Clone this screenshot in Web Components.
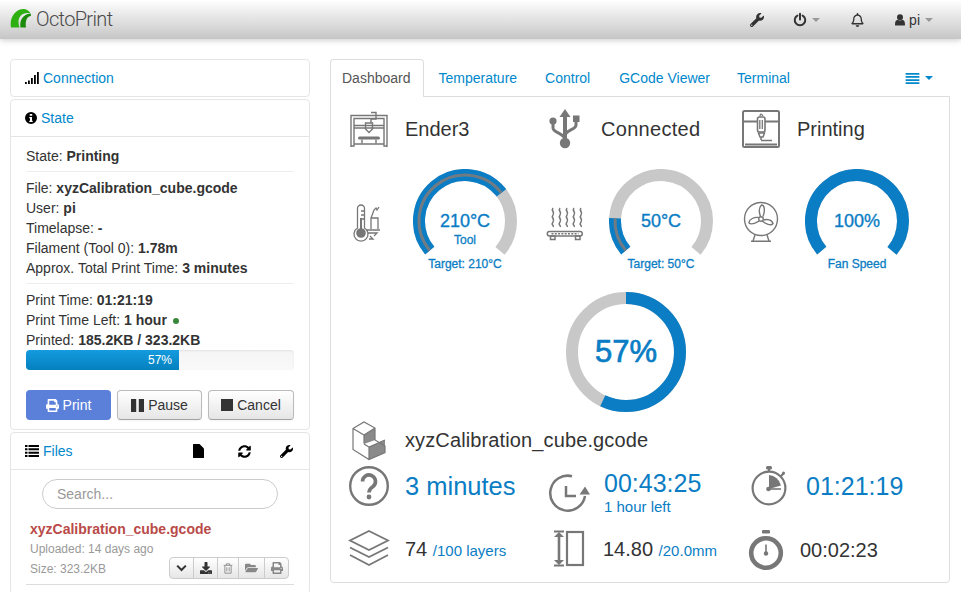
<!DOCTYPE html>
<html>
<head>
<meta charset="utf-8">
<title>OctoPrint</title>
<style>
	html, body { margin: 0; height: 592px; overflow: hidden; background: #fff; }
	body { font: 14px/20px "Liberation Sans", Arial, sans-serif; color: #333; }
</style>
</head>
<body>
<op-app></op-app>
<script>
// font awesome style glyphs, drawn in their own viewBox
const glyphs = {
	wrench: ['0 0 512 512', '<path d="M507.73 109.1c-2.24-9.03-13.54-12.09-20.12-5.51l-74.36 74.36-67.88-11.31-11.31-67.88 74.36-74.36c6.62-6.62 3.43-17.9-5.66-20.16-47.38-11.74-99.55.91-136.58 37.93-39.64 39.64-50.55 97.1-34.05 147.2L18.74 402.76c-24.99 24.99-24.99 65.51 0 90.5 24.99 24.99 65.51 24.99 90.5 0l213.21-213.21c50.12 16.71 107.47 5.68 147.37-34.22 37.07-37.07 49.7-89.32 37.91-136.73zM64 472c-13.25 0-24-10.75-24-24 0-13.26 10.75-24 24-24s24 10.74 24 24c0 13.25-10.75 24-24 24z"/>'],
	bell: ['0 0 448 512', '<path d="M439.39 362.29c-19.32-20.76-55.47-51.99-55.47-154.29 0-77.7-54.48-139.9-127.94-155.16V32c0-17.67-14.32-32-31.98-32s-31.98 14.33-31.98 32v20.84C118.56 68.1 64.08 130.3 64.08 208c0 102.3-36.15 133.53-55.47 154.29-6 6.45-8.66 14.16-8.61 21.71.11 16.4 12.98 32 32.1 32h383.8c19.12 0 32-15.6 32.1-32 .05-7.55-2.61-15.27-8.61-21.71zM67.53 368c21.22-27.97 44.42-74.33 44.53-159.42 0-.2-.06-.38-.06-.58 0-61.86 50.14-112 112-112s112 50.14 112 112c0 .2-.06.38-.06.58.11 85.1 23.31 131.46 44.53 159.42H67.53zM224 512c35.32 0 63.97-28.65 63.97-64H160.03c0 35.35 28.65 64 63.97 64z"/>'],
	refresh: ['0 0 512 512', '<path d="M370.72 133.28C339.458 104.008 298.888 87.962 255.848 88c-77.458.068-144.328 53.178-162.791 126.85-1.344 5.363-6.122 9.15-11.651 9.15H24.103c-7.498 0-13.194-6.807-11.807-14.176C33.933 94.924 134.813 8 256 8c66.448 0 126.791 26.136 171.315 68.685L463.03 40.97C478.149 25.851 504 36.559 504 57.941V192c0 13.255-10.745 24-24 24H345.941c-21.382 0-32.09-25.851-16.971-40.971l41.75-41.749zM32 296h134.059c21.382 0 32.09 25.851 16.971 40.971l-41.75 41.75c31.262 29.273 71.835 45.319 114.876 45.28 77.418-.07 144.315-53.144 162.787-126.849 1.344-5.363 6.122-9.15 11.651-9.15h57.304c7.498 0 13.194 6.807 11.807 14.176C478.067 417.076 377.187 504 256 504c-66.448 0-126.791-26.136-171.315-68.685L48.97 471.03C33.851 486.149 8 475.441 8 454.059V320c0-13.255 10.745-24 24-24z"/>'],
	print: ['0 0 512 512', '<path d="M448 192V77.25c0-8.49-3.37-16.62-9.37-22.63L393.37 9.37c-6-6-14.14-9.37-22.63-9.37H96C78.33 0 64 14.33 64 32v160c-35.35 0-64 28.65-64 64v112c0 8.84 7.16 16 16 16h48v96c0 17.67 14.33 32 32 32h320c17.67 0 32-14.33 32-32v-96h48c8.84 0 16-7.16 16-16V256c0-35.35-28.65-64-64-64zm-64 256H128v-96h256v96zm0-224H128V64h192v48c0 8.84 7.16 16 16 16h48v96zm48 72c-13.25 0-24-10.75-24-24 0-13.26 10.75-24 24-24s24 10.74 24 24c0 13.25-10.75 24-24 24z"/>'],
	folder: ['0 0 576 512', '<path d="M572.694 292.093L500.27 416.248A63.997 63.997 0 0 1 444.989 448H45.025c-18.523 0-30.064-20.093-20.731-36.093l72.424-124.155A64 64 0 0 1 152 256h399.964c18.523 0 30.064 20.093 20.73 36.093zM152 224h328v-48c0-26.51-21.49-48-48-48H272l-64-64H48C21.49 64 0 85.49 0 112v278.046l69.077-118.418C86.214 242.25 117.989 224 152 224z"/>'],
	download: ['0 0 512 512', '<path d="M216 0h80c13.3 0 24 10.7 24 24v168h87.7c17.8 0 26.7 21.5 14.1 34.1L269.7 378.3c-7.5 7.5-19.8 7.5-27.3 0L90.1 226.1c-12.6-12.6-3.7-34.1 14.1-34.1H192V24c0-13.3 10.7-24 24-24zm296 376v112c0 13.3-10.7 24-24 24H24c-13.3 0-24-10.7-24-24V376c0-13.3 10.7-24 24-24h146.7l49 49c20.1 20.1 52.5 20.1 72.6 0l49-49H488c13.3 0 24 10.7 24 24zm-124 88c0-11-9-20-20-20s-20 9-20 20 9 20 20 20 20-9 20-20zm64 0c0-11-9-20-20-20s-20 9-20 20 9 20 20 20 20-9 20-20z"/>'],
	power: ['0 0 24 24', '<path d="M7.5 5.2a9 9 0 1 0 9 0" fill="none" stroke="currentColor" stroke-width="3.400" stroke-linecap="round"/><path d="M12 2v10" fill="none" stroke="currentColor" stroke-width="3.400" stroke-linecap="round"/>'],
	user: ['0 0 20 24', '<circle cx="10" cy="6.5" r="6"/><path d="M1 23c-1 0-1-1-1-2 0-6 2-9 5.500-9.500 2.500 2 6.500 2 9 0C18 12 20 15 20 21c0 1 0 2-1 2z"/>'],
	info: ['0 0 24 24', '<path fill-rule="evenodd" d="M12 0a12 12 0 1 1 0 24a12 12 0 0 1 0-24zM9.500 4v3.500h5V4zM8.500 10v2.500h1.500v5H8.500V20h7v-2.500H14V10z"/>'],
	signal: ['0 0 14 12', '<rect x="0" y="10" width="1.800" height="2"/><rect x="3" y="8.500" width="1.800" height="3.500"/><rect x="6" y="6" width="1.800" height="6"/><rect x="9" y="3" width="1.800" height="9"/><rect x="12" y="0" width="1.800" height="12"/>'],
	list: ['0 0 14 12', '<path d="M0 0h2.500v2H0zM3.500 0H14v2H3.500zM0 3.300h2.500v2H0zM3.500 3.300H14v2H3.500zM0 6.700h2.500v2H0zM3.500 6.700H14v2H3.500zM0 10h2.500v2H0zM3.500 10H14v2H3.500z"/>'],
	lines: ['0 0 15 12', '<path d="M0 0h15v2H0zM0 3.300h15v2H0zM0 6.700h15v2H0zM0 10h15v2H0z"/>'],
	file: ['0 0 11 14', '<path d="M0 .5Q0 0 .5 0H6.500L11 4.500V13.500Q11 14 10.500 14H.5Q0 14 0 13.500z"/>'],
	pause: ['0 0 12 12', '<path d="M0 0h4.800v12H0zM7.200 0H12v12H7.200z"/>'],
	stop: ['0 0 12 12', '<path d="M0 0h12v12H0z"/>'],
	chevron: ['0 0 14 10', '<path d="M1.500 2l5.500 5.500L12.500 2" fill="none" stroke="currentColor" stroke-width="2.600"/>'],
	trash: ['0 0 12 14', '<path d="M.5 3h11M4 3V1h4v2M2 3v10h8V3M4.500 5.500v5M7.500 5.500v5" fill="none" stroke="currentColor" stroke-width="1.100"/>'],
};

class OpIcon extends HTMLElement {
	connectedCallback() {
		const [viewBox, body] = glyphs[this.getAttribute('name')];
		const w = this.getAttribute('w') || 14;
		const h = this.getAttribute('h') || 14;
		this.attachShadow({ mode: 'open' });
		this.shadowRoot.innerHTML = `
			<style>
				:host { display: inline-flex; flex: none; width: ${w}px; height: ${h}px; fill: currentColor; }
				svg { width: 100%; height: 100%; display: block; }
			</style>
			<svg viewBox="${viewBox}">${body}</svg>
		`;
	}
}

// the larger line drawings of the dashboard, 48x40 cells
const art = {
	ender: `<svg viewBox="0 0 48 40"><g fill="none" stroke="#777" stroke-width="1.400">
		<path d="M6 37V5.500h36V37M6 36h3V34h30v2h3M9 34V8.500h30V34"/>
		<path d="M9 15.500h30M9 18h30"/>
		<path d="M20.500 13h7v6l-3.500 3.500-3.500-3.500zM26 13V9h5V2.500h-5"/>
		<path d="M17 29.500v4M31 29.500v4"/></g>
		<rect x="13" y="26.500" width="22" height="3" rx="1.500" fill="#777"/></svg>`,
	usb: `<svg viewBox="0 0 48 40"><g fill="#777"><path d="M24-1l5.500 8h-3.500v25h-4V7h-3.500z"/><circle cx="24" cy="33" r="5.200"/><circle cx="12" cy="11" r="3.600"/><rect x="32" y="5.500" width="6.500" height="6.500"/></g>
		<path d="M12 12v6c0 5 12 5 12 12M35 12v3c0 5-11 5-11 11" fill="none" stroke="#777" stroke-width="3"/></svg>`,
	printing: `<svg viewBox="0 0 48 40"><g fill="none" stroke="#777"><rect x="6" y="1" width="36" height="36" rx="1.500" stroke-width="2"/>
		<path d="M7 11.500h13M28 11.500h13M8 34.500h32" stroke-width="1.800"/><path d="M24 30.500h11M26 6c-2-3-3-2-3 .5" stroke-width="1.300"/>
		<rect x="20.500" y="7" width="7.500" height="15" rx="2" stroke-width="1.600"/><path d="M22.800 10v9M25.300 10v9" stroke-width="1.300"/><path d="M21.500 23h6l-1.500 4h-3z M24 27v3" stroke-width="1.500"/></g></svg>`,
	tool: `<svg viewBox="0 0 48 48"><g fill="none" stroke="#777" stroke-width="1.300">
		<path d="M12.500 31V11.500a3.500 3.500 0 0 1 7 0V31a7 7 0 1 1-7 0z"/><path d="M16 14h3.500M16 18h3.500M16 22h3.500"/>
		<path d="M26 32V21h7v11M21 33h14M26 21l3-8 2-2 1 2 2-3M23 36h9l-3 3M25 39l3 3h-4"/></g>
		<circle cx="16" cy="36" r="4.800" fill="#777"/><rect x="15" y="21" width="2" height="12" fill="#777"/></svg>`,
	bed: `<svg viewBox="0 0 48 48"><g transform="translate(3.500 0)" fill="none" stroke="#777" stroke-width="1.500"><path d="M8.500 11c-2.500 3 2.500 4 0 7s2.500 4 0 7s1 3 .3 5M15.500 11c-2.500 3 2.500 4 0 7s2.500 4 0 7s1 3 .3 5M22.500 11c-2.500 3 2.500 4 0 7s2.500 4 0 7s1 3 .3 5M29.500 11c-2.500 3 2.500 4 0 7s2.500 4 0 7s1 3 .3 5M36.500 11c-2.500 3 2.500 4 0 7s2.500 4 0 7s1 3 .3 5"/>
		<rect x="2.800" y="34.500" width="35" height="4.500" rx="2.200"/><path d="M6 39h4.500v3.500H6zM31 39h4.500v3.500H31z"/><path d="M7 36.800h27" stroke-dasharray="2 1.300" stroke-width="1.500"/></g></svg>`,
	fan: `<svg viewBox="0 0 48 48"><g fill="none" stroke="#777" stroke-width="1.400"><circle cx="24" cy="22" r="16.500"/><path d="M18 38l-2 6M30 38l2 6M14 44.300h20"/>
		<path d="M23.500 19.500c-1.500-4-1.500-9 1-11.500 3.500 0 3.500 6.500 1.500 11.500M26.500 23c3.500-1 8.500-.5 9.500 3.500-2 3-7.500 0-11-2.500M22 24c-3.500 2-7.500 4.500-10 2-.5-3.500 5-6 9.500-5.500"/><circle cx="24" cy="22" r="2.300"/></g></svg>`,
	cube: `<svg viewBox="0 0 48 40"><path d="M24 27l16-7v12.500l-16 7zM19 15l11-7v12l-11 4z" fill="#8a8a8a"/>
		<g fill="none" stroke="#777" stroke-width="1.200"><path d="M8 8.500L19 2l11 6v12l10 6v6.500L24 39.500 8 29.500zM8 8.500L19 15l11-7M19 15v8.500M19 24l5 3 16-7M24 27v12.500"/></g></svg>`,
	question: `<svg viewBox="0 0 48 48"><circle cx="24" cy="24" r="18.800" fill="none" stroke="#777" stroke-width="2.400"/><path d="M17.500 19.500a6.500 6.500 0 1 1 10.500 5c-3 2-4 3-4 6" fill="none" stroke="#777" stroke-width="3.600"/><circle cx="24" cy="35" r="2.400" fill="#777"/></svg>`,
	clock: `<svg viewBox="0 0 48 48"><path d="M28 7.200A17.500 17.500 0 1 0 41 27" fill="none" stroke="#777" stroke-width="2.500"/><path d="M35.500 25.500l5.500-8 5 8z" fill="#777"/><path d="M22 17v10h10" fill="none" stroke="#777" stroke-width="2.500"/></svg>`,
	stopwatch: `<svg viewBox="0 0 48 48"><circle cx="24" cy="26" r="16.400" fill="none" stroke="#777" stroke-width="2.200"/><path d="M24 27V13a14 14 0 0 1 12 10.500z" fill="#777"/><rect x="21" y="4" width="6" height="3.500" rx="1.500" fill="#777"/><path d="M24 7v3M36 14l3-3" stroke="#777" stroke-width="2.200"/><circle cx="38.500" cy="11" r="1.500" fill="#777"/><circle cx="23.500" cy="27" r="2.300" fill="#777"/><path d="M24 27h12" stroke="#777" stroke-width="1.600"/></svg>`,
	layers: `<svg viewBox="0 0 48 48"><g fill="none" stroke="#777" stroke-width="1.800"><path d="M24 5l19 9.500L24 24 5 14.500z"/><path d="M5 21.500L24 31l19-9.500M5 29L24 39l19-10"/></g></svg>`,
	zheight: `<svg viewBox="0 0 48 48"><rect x="24" y="6" width="16" height="33" fill="none" stroke="#777" stroke-width="2.200"/><path d="M16 8v29" stroke="#777" stroke-width="2.600"/><path d="M11 5.500h10M11 39.500h10" stroke="#777" stroke-width="2"/><path d="M16 6l5 5H11zM16 39l5-5H11z" fill="#777"/></svg>`,
	timer: `<svg viewBox="0 0 48 48"><circle cx="24" cy="27" r="14.800" fill="none" stroke="#777" stroke-width="4.600"/><rect x="20" y="4" width="8" height="3.400" rx="1.200" fill="#777"/><path d="M24 18.500v9" stroke="#777" stroke-width="1.600"/><circle cx="24" cy="27.500" r="2.200" fill="#777"/></svg>`,
};

class OpArt extends HTMLElement {
	connectedCallback() {
		this.attachShadow({ mode: 'open' });
		this.shadowRoot.innerHTML = `
			<style>
				:host { display: block; flex: none; width: 48px; height: ${this.getAttribute('h') || 40}px; }
				svg { width: 100%; height: 100%; display: block; overflow: visible; }
			</style>
			${art[this.getAttribute('name')]}
		`;
	}
}

class OpNavbar extends HTMLElement {
	connectedCallback() {
		this.attachShadow({ mode: 'open' });
		this.shadowRoot.innerHTML = `
			<style>
				:host {
					display: flex;
					align-items: center;
					height: 39px;
					padding: 0 28px 0 10px;
					background: linear-gradient(#fff, #c6c6c6);
					box-shadow: 0 1px 6px rgba(0, 0, 0, .22);
					color: #333;
				}
				.brand {
					display: flex;
					align-items: center;
					margin-right: auto;
					font: 300 20px/26px Roboto, "Liberation Sans", sans-serif;
					letter-spacing: -.65px;
					color: #4a4a4a;
				}
				.brand span { margin-bottom: 2px; }
				.brand svg { width: 21px; height: 19px; margin: 0 5px 3px 0; }
				.caret { width: 0; height: 0; margin-left: 5px; border: 4px solid transparent; border-top-color: #999; border-bottom: 0; }
				.item { display: flex; align-items: center; }
			</style>
			<div class="brand">
				<svg viewBox="0 0 21 19">
					<path d="M1 18.500C-1 8 6 0 13.500 0c3 0 5.500 1.500 7 4.500-3-1-7.500-.5-10 2.500-2.500 3-2.500 7-1 11.500z" fill="#2eb012"/>
					<path d="M10.500 18.500C9.500 12 12 5.500 20.500 4.500c.5 1 .5 1.500.5 2.500-4 0-6 5-5 11.500z" fill="#1c8a0a"/>
				</svg>
				<span>OctoPrint</span>
			</div>
			<div class="item"><op-icon name="wrench"></op-icon></div>
			<div class="item" style="margin-left:29px"><op-icon name="power" w="14" h="15"></op-icon><span class="caret"></span></div>
			<div class="item" style="margin-left:31px"><op-icon name="bell" w="13" h="14"></op-icon></div>
			<div class="item" style="margin-left:31px"><op-icon name="user" w="10" h="12"></op-icon><span style="margin-left:4px">pi</span><span class="caret"></span></div>
		`;
	}
}

class OpPanel extends HTMLElement {
	connectedCallback() {
		this.attachShadow({ mode: 'open' });
		this.shadowRoot.innerHTML = `
			<style>
				:host {
					display: block;
					border: 1px solid #e5e5e5;
					border-radius: 4px;
					margin-bottom: 2px;
				}
				header {
					display: flex;
					align-items: center;
					height: 20px;
					padding: 8px 15px 8px 14px;
					color: #0088cc;
				}
				header ::slotted([slot="icon"]) { color: #000; margin-right: 4px; }
				.actions { margin-left: auto; display: flex; align-items: center; color: #000; }
				main { display: none; padding: 9px 15px; border-top: 1px solid #e5e5e5; }
				:host([open]) main { display: block; }
			</style>
			<header>
				<slot name="icon"></slot>
				<span>${this.getAttribute('heading')}</span>
				<div class="actions"><slot name="actions"></slot></div>
			</header>
			<main><slot></slot></main>
		`;
	}
}

class OpState extends HTMLElement {
	connectedCallback() {
		this.attachShadow({ mode: 'open' });
		this.shadowRoot.innerHTML = `
			<style>
				:host { display: block; color: #333; }
				hr { border: 0; border-top: 1px solid #eee; margin: 5px 0 6px; }
				.dot { display: inline-block; width: 6px; height: 6px; margin-left: 2px; border-radius: 50%; background: #3a873a; vertical-align: 1px; }
				.bar { position: relative; height: 20px; margin-bottom: 20px; border-radius: 4px; background: linear-gradient(#f5f5f5, #f9f9f9); overflow: hidden; box-shadow: inset 0 1px 2px rgba(0,0,0,.08); text-align: center; color: #fff; font-size: 12px; }
				.bar i { position: absolute; left: 0; top: 0; bottom: 0; width: 57%; background: linear-gradient(#149bdf, #0480be); }
				.bar span { position: relative; }
				.buttons { display: flex; gap: 6px; }
				button {
					display: flex;
					align-items: center;
					justify-content: center;
					gap: 4px;
					width: 85px;
					height: 30px;
					padding: 0;
					font: inherit;
					color: #333;
					border: 1px solid #bbb;
					border-bottom-color: #a2a2a2;
					border-radius: 4px;
					background: linear-gradient(#fff, #e6e6e6);
					box-shadow: inset 0 1px 0 rgba(255,255,255,.2), 0 1px 2px rgba(0,0,0,.05);
				}
				button.primary { color: #fff; border: 0; background: #5b80da; box-shadow: none; }
				b { color: #333; }
			</style>
			<div>State: <b>Printing</b></div>
			<hr>
			<div>File: <b>xyzCalibration_cube.gcode</b></div>
			<div>User: <b>pi</b></div>
			<div>Timelapse: <b>-</b></div>
			<div>Filament (Tool 0): <b>1.78m</b></div>
			<div>Approx. Total Print Time: <b>3 minutes</b></div>
			<hr>
			<div>Print Time: <b>01:21:19</b></div>
			<div>Print Time Left: <b>1 hour</b> <span class="dot"></span></div>
			<div>Printed: <b>185.2KB / 323.2KB</b></div>
			<div class="bar"><i></i><span>57%</span></div>
			<div class="buttons">
				<button class="primary"><op-icon name="print" w="13" h="13"></op-icon>Print</button>
				<button><op-icon name="pause" w="13" h="13"></op-icon>Pause</button>
				<button style="width:86px"><op-icon name="stop" w="12" h="12"></op-icon>Cancel</button>
			</div>
		`;
	}
}

class OpFiles extends HTMLElement {
	connectedCallback() {
		this.attachShadow({ mode: 'open' });
		this.shadowRoot.innerHTML = `
			<style>
				:host { display: block; }
				input {
					display: block;
					box-sizing: border-box;
					width: 236px;
					height: 30px;
					margin: 0 0 10px 16px;
					padding: 0 14px;
					font: inherit;
					border: 1px solid #ccc;
					border-radius: 15px;
					outline: 0;
				}
				input::placeholder { color: #999; opacity: 1; }
				.entry { padding: 0 5px 5px 4px; border-bottom: 1px solid #ddd; }
				.name { font-weight: bold; color: #b94a48; }
				.meta { font-size: 12px; color: #999; }
				.row { display: flex; justify-content: space-between; align-items: flex-end; }
				.group { display: flex; height: 20px; margin-top: -2px; border: 1px solid #ccc; border-radius: 4px; background: linear-gradient(#fff, #e6e6e6); }
				.group span { display: flex; align-items: center; justify-content: center; height: 20px; border-left: 1px solid #ccc; color: #333; }
				.group span:first-child { border-left: 0; }
				.group .off { color: #888; }
			</style>
			<input placeholder="Search...">
			<div class="entry">
				<div class="name">xyzCalibration_cube.gcode</div>
				<div class="meta">Uploaded: 14 days ago</div>
				<div class="row">
					<div class="meta">Size: 323.2KB</div>
					<div class="group">
						<span style="width:23px"><op-icon name="chevron" w="11" h="8"></op-icon></span>
						<span style="width:23px"><op-icon name="download" w="12" h="12"></op-icon></span>
						<span class="off" style="width:20px"><op-icon name="trash" w="10" h="11"></op-icon></span>
						<span class="off" style="width:25px"><op-icon name="folder" w="13" h="12"></op-icon></span>
						<span class="off" style="width:23px"><op-icon name="print" w="12" h="12"></op-icon></span>
					</div>
				</div>
			</div>
		`;
	}
}

class OpTabs extends HTMLElement {
	connectedCallback() {
		this.attachShadow({ mode: 'open' });
		this.shadowRoot.innerHTML = `
			<style>
				:host { display: block; }
				nav { display: flex; height: 37px; padding-right: 17px; align-items: flex-start; color: #0088cc; }
				a { padding: 8px 12px 9px; margin-right: 3px; border: 1px solid transparent; border-bottom: 0; }
				a.active { color: #555; background: #fff; border-color: #ddd; border-radius: 4px 4px 0 0; position: relative; z-index: 1; height: 21px; padding: 8px 12px 8px 11px; margin-right: 2px; }
				.more { margin-left: auto; display: flex; align-items: center; height: 38px; color: #0088cc; }
				.caret { width: 0; height: 0; margin-left: 5px; border: 4px solid transparent; border-top-color: #0088cc; border-bottom: 0; }
				.content { height: 485px; border: 1px solid #ddd; border-radius: 0 0 4px 4px; }
			</style>
			<nav>
				<a class="active">Dashboard</a>
				<a style="margin-right:2px">Temperature</a>
				<a>Control</a>
				<a style="margin-right:1px">GCode Viewer</a>
				<a>Terminal</a>
				<div class="more"><op-icon name="lines" w="15" h="11"></op-icon><span class="caret"></span></div>
			</nav>
			<div class="content"><slot></slot></div>
		`;
	}
}

class OpGauge extends HTMLElement {
	connectedCallback() {
		const value = +this.getAttribute('value');
		const sweep = 260 * value;
		const r = 46;
		const len = 2 * Math.PI * r;
		const track = len * 260 / 360;
		const fill = len * sweep / 360;
		const inner = this.hasAttribute('actual')
			? `<circle cx="52" cy="52" r="${r}" fill="none" stroke="#717b84" stroke-width="3" stroke-dasharray="${fill} ${len}"/>`
			: '';
		this.attachShadow({ mode: 'open' });
		this.shadowRoot.innerHTML = `
			<style>
				:host { display: block; position: relative; flex: none; width: 104px; height: 104px; margin-left: 20px; color: #0a7dc4; text-align: center; }
				svg { display: block; }
				.value { position: absolute; left: 0; right: 0; top: 41px; font-size: 18px; line-height: 22px; -webkit-text-stroke: .35px #0a7dc4; }
				.sub { position: absolute; left: 0; right: 0; top: 64px; font-size: 12px; line-height: 14px; -webkit-text-stroke: .3px #0a7dc4; }
				.label { position: absolute; left: -10px; right: -10px; top: 88px; font-size: 12px; line-height: 14px; -webkit-text-stroke: .3px #0a7dc4; }
			</style>
			<svg width="104" height="104" viewBox="0 0 104 104">
				<g transform="rotate(140 52 52)">
					<circle cx="52" cy="52" r="${r}" fill="none" stroke="#c8c8c8" stroke-width="12" stroke-dasharray="${track} ${len}"/>
					<circle cx="52" cy="52" r="${r}" fill="none" stroke="#0a7dc4" stroke-width="12" stroke-dasharray="${fill} ${len}"/>
					${inner}
				</g>
			</svg>
			<div class="value">${this.getAttribute('text')}</div>
			${this.getAttribute('sub') ? `<div class="sub">${this.getAttribute('sub')}</div>` : ''}
			<div class="label">${this.getAttribute('label')}</div>
		`;
	}
}

class OpDonut extends HTMLElement {
	connectedCallback() {
		const r = 54;
		const len = 2 * Math.PI * r;
		const fill = len * this.getAttribute('value');
		this.attachShadow({ mode: 'open' });
		this.shadowRoot.innerHTML = `
			<style>
				:host { display: block; position: relative; width: 120px; height: 120px; color: #0a7dc4; }
				svg { display: block; }
				div { position: absolute; left: 0; right: 0; top: 42px; text-align: center; font-size: 31px; line-height: 36px; -webkit-text-stroke: .7px #0a7dc4; }
			</style>
			<svg width="120" height="120" viewBox="0 0 120 120">
				<circle cx="60" cy="60" r="${r}" fill="none" stroke="#c8c8c8" stroke-width="12"/>
				<circle cx="60" cy="60" r="${r}" fill="none" stroke="#0a7dc4" stroke-width="12" stroke-dasharray="${fill} ${len}" transform="rotate(-90 60 60)"/>
			</svg>
			<div>${this.getAttribute('text')}</div>
		`;
	}
}

class OpStat extends HTMLElement {
	connectedCallback() {
		this.attachShadow({ mode: 'open' });
		this.shadowRoot.innerHTML = `
			<style>
				:host { display: flex; align-items: center; min-width: 0; white-space: nowrap; }
				.text { margin-left: 12px; }
			</style>
			<slot name="icon"></slot>
			<div class="text"><slot></slot></div>
		`;
	}
}

class OpDashboard extends HTMLElement {
	connectedCallback() {
		this.attachShadow({ mode: 'open' });
		this.shadowRoot.innerHTML = `
			<style>
				:host { display: block; padding: 13px 0 0 14px; color: #333; font-size: 20px; }
				.row { display: grid; grid-template-columns: repeat(3, 196px); align-items: center; }
				.head { height: 40px; margin-bottom: 19px; }
				.head span { display: block; margin-bottom: 2px; }
				.gauges { height: 104px; margin-bottom: 19px; }
				.gauge { display: flex; align-items: center; }
				op-donut { margin: 0 0 8px 221px; }
				.big { font-size: 25.500px; line-height: 30px; color: #0a7dc4; }
				.time { font-size: 25px; }
				.small { font-size: 15px; line-height: 18px; color: #0a7dc4; }
				.mini { font-size: 15px; color: #0a7dc4; }
				.stats { height: 50px; margin-top: 1px; grid-template-rows: 50px; }
				.totals { height: 40px; margin-top: 19px; grid-template-rows: 40px; }
			</style>
			<div class="row head">
				<op-stat><op-art slot="icon" name="ender"></op-art><span>Ender3</span></op-stat>
				<op-stat><op-art slot="icon" name="usb"></op-art><span style="letter-spacing:.3px">Connected</span></op-stat>
				<op-stat><op-art slot="icon" name="printing"></op-art><span>Printing</span></op-stat>
			</div>
			<div class="row gauges">
				<div class="gauge"><op-art name="tool" h="48"></op-art><op-gauge actual value=".7" text="210°C" sub="Tool" label="Target: 210°C"></op-gauge></div>
				<div class="gauge"><op-art name="bed" h="48"></op-art><op-gauge actual value=".1667" text="50°C" label="Target: 50°C"></op-gauge></div>
				<div class="gauge"><op-art name="fan" h="48"></op-art><op-gauge value="1" text="100%" label="Fan Speed"></op-gauge></div>
			</div>
			<op-donut value=".57" text="57%"></op-donut>
			<op-stat style="height:40px"><op-art slot="icon" name="cube"></op-art><div style="letter-spacing:.12px">xyzCalibration_cube.gcode</div></op-stat>
			<div class="row stats">
				<op-stat><op-art slot="icon" name="question" h="48"></op-art><span class="big">3 minutes</span></op-stat>
				<op-stat style="margin-left:3px"><op-art slot="icon" name="clock" h="48" style="margin-top:14px"></op-art><div style="margin-top:11px"><div class="big time">00:43:25</div><div class="small">1 hour left</div></div></op-stat>
				<op-stat style="margin-left:8px"><op-art slot="icon" name="stopwatch" h="48"></op-art><span class="big time" style="margin-left:1px">01:21:19</span></op-stat>
			</div>
			<div class="row totals">
				<op-stat><op-art slot="icon" name="layers" h="48"></op-art><span>74 <span class="mini">/100 layers</span></span></op-stat>
				<op-stat style="margin-left:2px"><op-art slot="icon" name="zheight" h="48"></op-art><span>14.80 <span class="mini">/20.0mm</span></span></op-stat>
				<op-stat style="margin-left:5px"><op-art slot="icon" name="timer" h="48"></op-art><span style="margin-left:-2px">00:02:23</span></op-stat>
			</div>
		`;
	}
}

class OpApp extends HTMLElement {
	connectedCallback() {
		this.attachShadow({ mode: 'open' });
		this.shadowRoot.innerHTML = `
			<style>
				:host { display: block; }
				.page { display: flex; gap: 20px; padding: 20px 10px 0; }
				aside { flex: none; width: 300px; }
				section { flex: none; width: 620px; }
			</style>
			<op-navbar></op-navbar>
			<div class="page">
				<aside>
					<op-panel heading="Connection"><op-icon slot="icon" name="signal" w="14" h="12"></op-icon></op-panel>
					<op-panel heading="State" open><op-icon slot="icon" name="info" w="12" h="12"></op-icon><op-state></op-state></op-panel>
					<op-panel heading="Files" open>
						<op-icon slot="icon" name="list" w="14" h="12"></op-icon>
						<op-icon slot="actions" name="file" w="11" h="14"></op-icon>
						<op-icon slot="actions" name="refresh" w="13" h="13" style="margin-left:34px"></op-icon>
						<op-icon slot="actions" name="wrench" w="13" h="13" style="margin-left:29px;margin-right:1px"></op-icon>
						<op-files></op-files>
					</op-panel>
				</aside>
				<section>
					<op-tabs><op-dashboard></op-dashboard></op-tabs>
				</section>
			</div>
		`;
	}
}

customElements.define('op-icon', OpIcon);
customElements.define('op-art', OpArt);
customElements.define('op-navbar', OpNavbar);
customElements.define('op-panel', OpPanel);
customElements.define('op-state', OpState);
customElements.define('op-files', OpFiles);
customElements.define('op-tabs', OpTabs);
customElements.define('op-gauge', OpGauge);
customElements.define('op-donut', OpDonut);
customElements.define('op-stat', OpStat);
customElements.define('op-dashboard', OpDashboard);
customElements.define('op-app', OpApp);
</script>
</body>
</html>
